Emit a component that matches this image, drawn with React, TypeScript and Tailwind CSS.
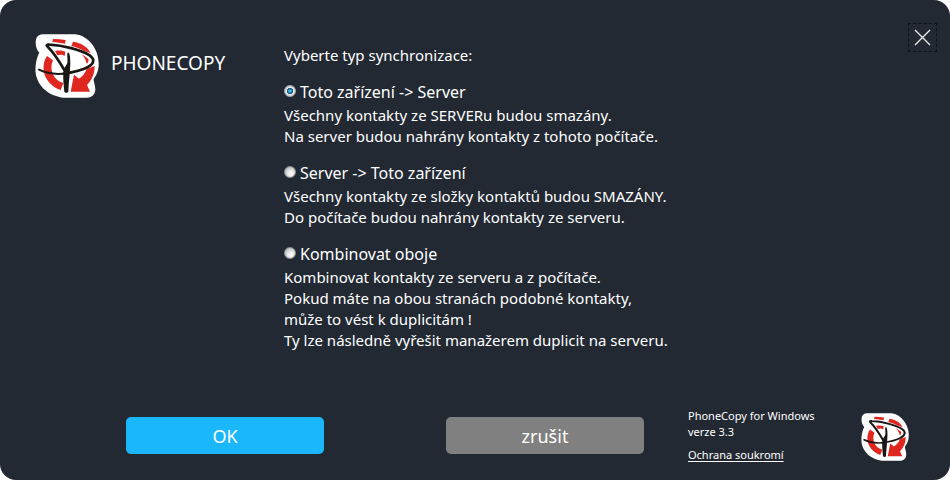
import { useState } from "react";
import clsx from "clsx";

const options = [
  {
    id: "upload",
    title: "Toto zařízení -> Server",
    lines: [
      "Všechny kontakty ze SERVERu budou smazány.",
      "Na server budou nahrány kontakty z tohoto počítače.",
    ],
  },
  {
    id: "download",
    title: "Server -> Toto zařízení",
    lines: [
      "Všechny kontakty ze složky kontaktů budou SMAZÁNY.",
      "Do počítače budou nahrány kontakty ze serveru.",
    ],
  },
  {
    id: "merge",
    title: "Kombinovat oboje",
    lines: [
      "Kombinovat kontakty ze serveru a z počítače.",
      "Pokud máte na obou stranách podobné kontakty,",
      "může to vést k duplicitám !",
      "Ty lze následně vyřešit manažerem duplicit na serveru.",
    ],
  },
];

const Logo = ({ className }: { className: string }) => (
  <svg viewBox="28 26 192 192" className={clsx("shrink-0", className)} aria-hidden="true">
    <path
      fill="#fff"
      d="M50 27H150C188 32 218 70 219 112C220 132 214 148 204 160C203 169 209 178 209 192C209 207 199 217 184 217H112C70 212 36 184 30 144C28 122 32 98 41 82C34 75 30 65 30 51C30 36 38 28 50 27Z"
    />
    <g fill="#df2720">
      <path d="M82 41C95 41 108 42 120 44L118 55C106 53 94 51 80 50Z" />
      <path d="M142 49C168 53 186 65 195 83L174 76C163 70 150 65 137 62Z" />
      <path d="M88 77C99 74 110 76 119 79L117 92C109 86 101 89 95 90Z" />
      <path d="M168 86L188 101C190 107 187 113 183 115C181 104 175 95 168 86Z" />
      <path d="M64 92L82 105C77 116 76 127 79 139C84 156 97 168 113 173L105 194C77 184 58 162 54 136C52 119 56 103 64 92Z" />
      <path d="M183 131L207 122C207 145 199 164 184 179L193 199L135 199L145 148L160 160C171 153 179 143 183 131Z" />
    </g>
    <g fill="none" stroke="#1b1715" strokeLinecap="round" strokeLinejoin="round">
      <path
        strokeWidth="8"
        d="M116 134C102 110 85 82 66 64C60 59 64 57 72 58C111 60 165 73 192 90C208 101 206 115 187 125C169 135 141 141 114 145"
      />
      <path strokeWidth="6" d="M126 143C98 148 65 145 40 133" />
    </g>
    <path
      fill="#1b1715"
      d="M126 82C132 80 134 94 134 114C133 143 129 174 128 199C126 203 118 203 116 199C114 178 111 151 114 134C118 124 122 120 125 113C127 103 123 89 126 82Z"
    />
  </svg>
);

const App = () => {
  const [selected, setSelected] = useState("upload");

  return (
    <main className="flex min-h-screen flex-col rounded-2xl bg-[#222933] font-['Noto_Sans','Open_Sans',sans-serif] text-[15px] leading-[21px] text-white">
      <div className="flex grow items-start pt-[23px] pr-[13px]">
        <header className="flex w-[284px] shrink-0 items-start gap-3 pt-[11px] pl-[35px]">
          <Logo className="size-16" />
          <h1 className="pt-[17px] text-[19px] leading-6">PHONECOPY</h1>
        </header>

        <fieldset className="grow pt-5">
          <legend className="float-left mb-[13px] w-full pt-[2px]">Vyberte typ synchronizace:</legend>
          <div className="clear-both flex flex-col gap-[13px]">
            {options.map((option) => (
              <div key={option.id}>
                <label className="flex items-center gap-1 text-base leading-[26px]">
                  <input
                    type="radio"
                    name="sync"
                    value={option.id}
                    checked={selected === option.id}
                    onChange={() => setSelected(option.id)}
                    aria-describedby={`${option.id}-info`}
                    className="mb-[3px] size-3 appearance-none rounded-full border border-[#8e8f8f] bg-[radial-gradient(circle_at_60%_65%,#f4f4f4_20%,#b9bbbd_80%)] checked:border-[#a7adb3] checked:bg-[radial-gradient(circle,#6fd3f5_0,#1687bd_26%,#174664_40%,#eef1f3_46%,#c9cdd0_70%)]"
                  />
                  {option.title}
                </label>
                <p id={`${option.id}-info`}>
                  {option.lines.map((line) => (
                    <span key={line} className="block">
                      {line}
                    </span>
                  ))}
                </p>
              </div>
            ))}
          </div>
        </fieldset>

        <button
          type="button"
          aria-label="Zavřít"
          className="flex size-[29px] shrink-0 items-center justify-center border border-dashed border-[#0d1119]"
        >
          <svg viewBox="0 0 17 17" className="size-[17px]" fill="none" stroke="#e9ece9" strokeWidth="1.4">
            <path d="M1 1l15 15M16 1L1 16" />
          </svg>
        </button>
      </div>

      <footer className="flex items-start pr-[41px] pb-[17px] pl-[126px]">
        <div className="flex grow gap-[122px] pt-1 pr-11 text-lg">
          <button type="button" className="h-[37px] flex-1 rounded-[5px] bg-[#1ab7fb]">
            OK
          </button>
          <button type="button" className="h-[37px] flex-1 rounded-[5px] bg-[#808080]">
            zrušit
          </button>
        </div>
        <div className="-mt-[5px] w-[173px] shrink-0 text-[11px] leading-4">
          <p>PhoneCopy for Windows</p>
          <p>verze 3.3</p>
          <a href="#soukromi" className="mt-[7px] block underline underline-offset-2">
            Ochrana soukromí
          </a>
        </div>
        <Logo className="size-12" />
      </footer>
    </main>
  );
};

export default App;
